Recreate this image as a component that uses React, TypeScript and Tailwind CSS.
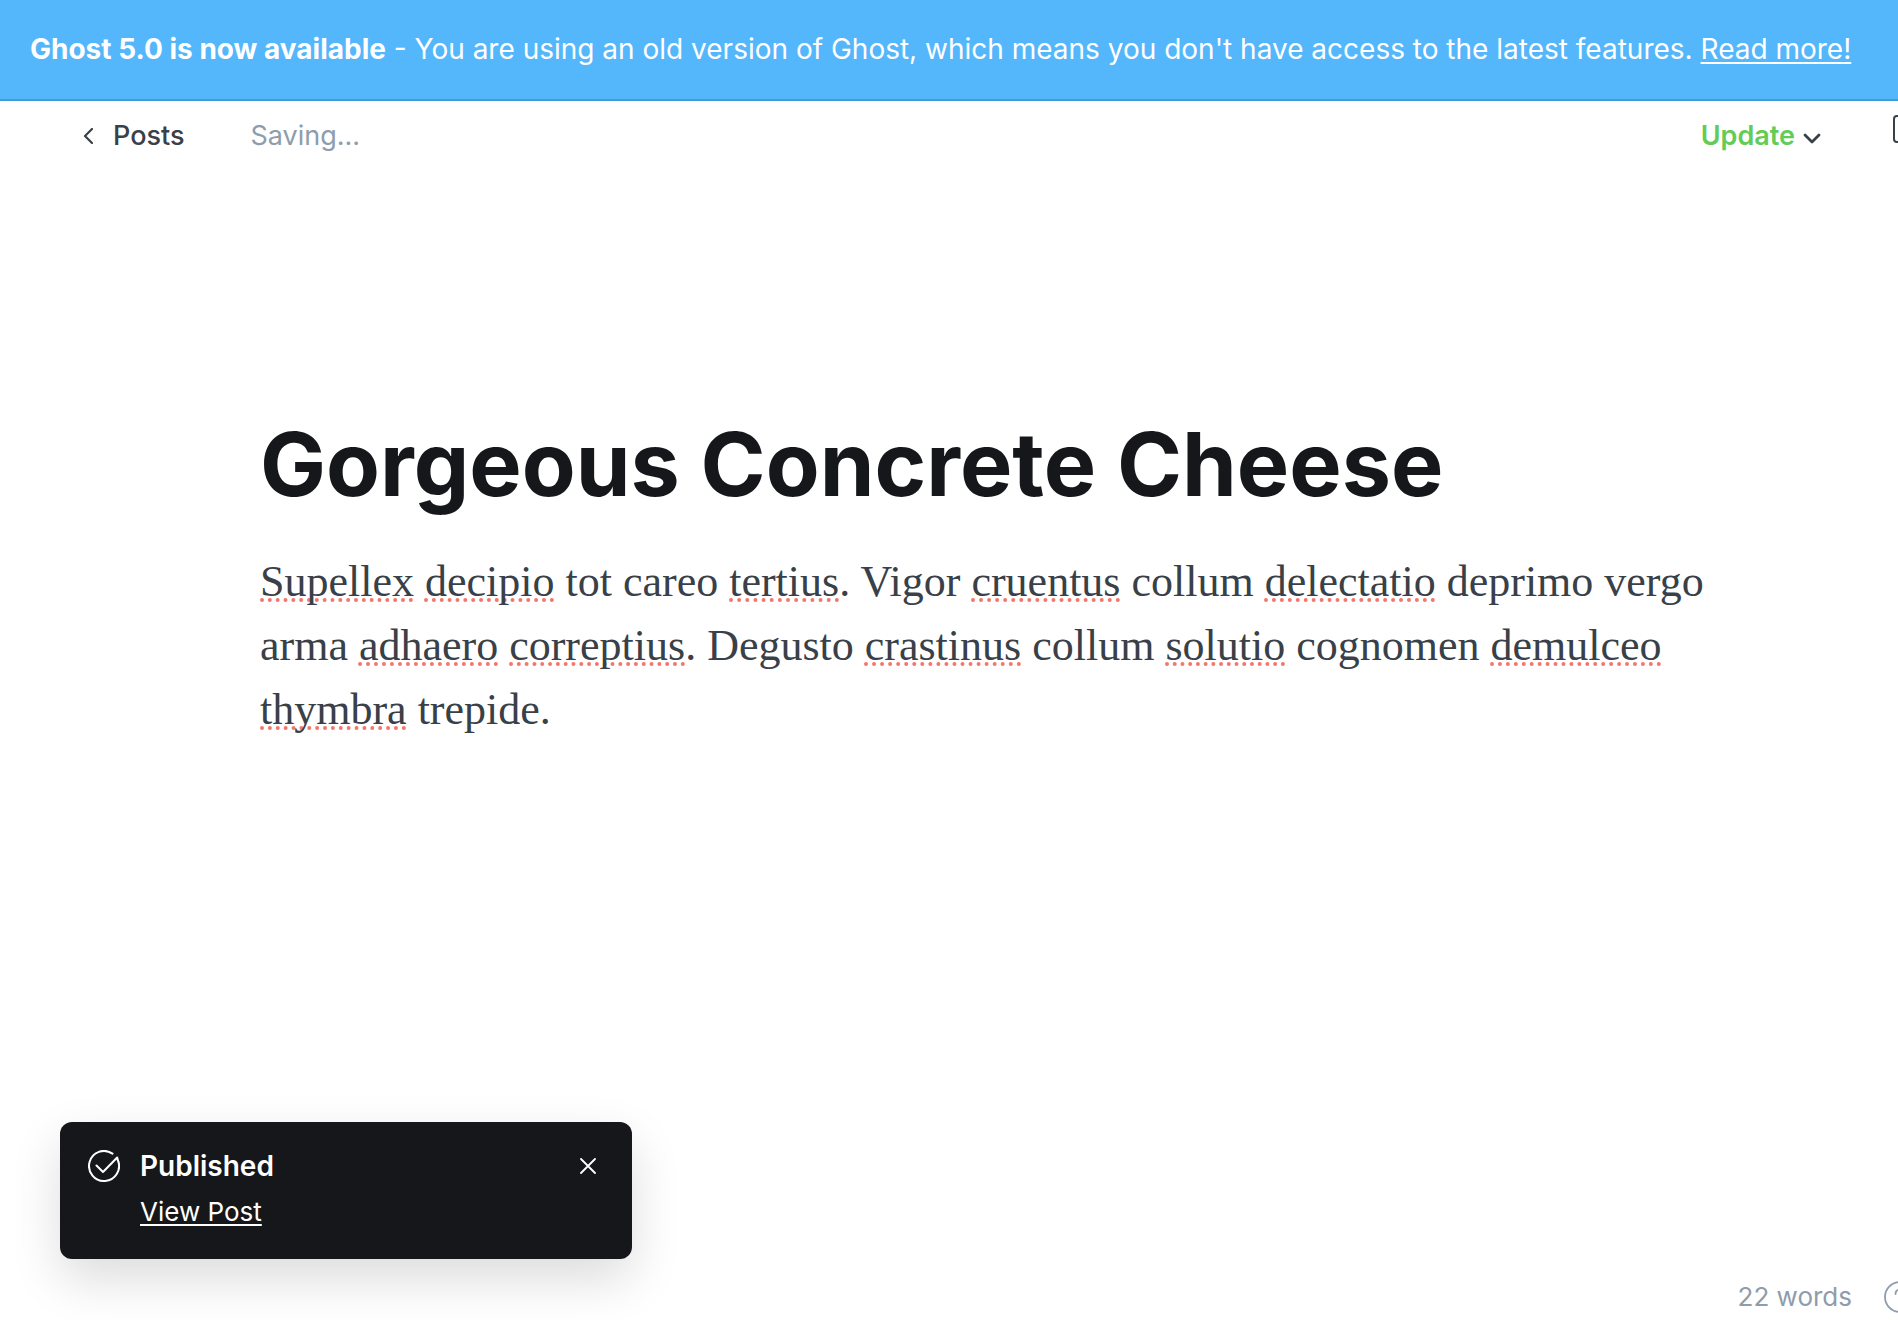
const body: { text: string; flagged?: boolean; tail?: string }[][] = [
  [
    { text: "Supellex", flagged: true },
    { text: "decipio", flagged: true },
    { text: "tot careo" },
    { text: "tertius", flagged: true, tail: "." },
    { text: "Vigor" },
    { text: "cruentus", flagged: true },
    { text: "collum" },
    { text: "delectatio", flagged: true },
    { text: "deprimo vergo" },
  ],
  [
    { text: "arma" },
    { text: "adhaero", flagged: true },
    { text: "correptius", flagged: true, tail: "." },
    { text: "Degusto" },
    { text: "crastinus", flagged: true },
    { text: "collum" },
    { text: "solutio", flagged: true },
    { text: "cognomen" },
    { text: "demulceo", flagged: true },
  ],
  [{ text: "thymbra", flagged: true }, { text: "trepide." }],
];

function Banner() {
  return (
    <aside className="border-b-2 border-[#3f9ce0] bg-[#54b6fb] px-[30px] py-[30px] text-[28px] leading-[39px] whitespace-nowrap text-white">
      <strong className="font-bold">Ghost 5.0 is now available</strong> - You are using an old
      version of Ghost, which means you don't have access to the latest features.{" "}
      <a href="#upgrade" className="underline decoration-2 underline-offset-[3px]">
        Read more!
      </a>
    </aside>
  );
}

function Toolbar() {
  return (
    <header className="flex h-[70px] items-center justify-between overflow-hidden pl-[83px] text-[27px] leading-9">
      <div className="flex items-center">
        <a href="#posts" className="flex items-center gap-5 font-medium text-[#394047]">
          <svg viewBox="0 0 10 16" className="h-4 w-[10px]" fill="none" stroke="currentColor" strokeWidth="2.2" strokeLinecap="round" strokeLinejoin="round" aria-hidden="true">
            <path d="M9 1 2 8l7 7" />
          </svg>
          Posts
        </a>
        <span className="ml-[66px] text-[#8e9cac]">Saving...</span>
      </div>
      <div className="-mr-6 flex items-center">
        <button type="button" className="mr-[72px] flex items-center gap-2 font-semibold text-[#62cc54]">
          Update
          <svg viewBox="0 0 18 11" className="mt-1 h-[11px] w-[18px] text-[#394047]" fill="none" stroke="currentColor" strokeWidth="2.8" strokeLinecap="round" strokeLinejoin="round" aria-hidden="true">
            <path d="m2 2 7 7 7-7" />
          </svg>
        </button>
        <button type="button" aria-label="Settings" className="-mt-[14px] h-7 w-[29px] rounded border-2 border-[#394047]" />
      </div>
    </header>
  );
}

function Toast() {
  return (
    <section role="status" className="flex w-[572px] items-start rounded-xl bg-[#15171a] px-7 pt-6 pb-[29px] text-white shadow-[0_20px_50px_rgba(0,0,0,0.14)]">
      <svg viewBox="0 0 32 32" className="mt-1 size-8 shrink-0" fill="none" stroke="currentColor" strokeWidth="2" strokeLinecap="round" strokeLinejoin="round" aria-hidden="true">
        <path d="M24.500 3.600A15 15 0 1 0 29.800 10M8.500 15.500l6.500 6.500L29.200 7.500l1 4" />
      </svg>
      <div className="ml-5 flex grow flex-col gap-2">
        <h2 className="text-[28px] leading-10 font-semibold">Published</h2>
        <a href="#view" className="self-start text-[26px] leading-9 underline decoration-2 underline-offset-[3px]">
          View Post
        </a>
      </div>
      <button type="button" aria-label="Close" className="mt-3 mr-2">
        <svg viewBox="0 0 16 16" className="size-4" fill="none" stroke="currentColor" strokeWidth="1.800" strokeLinecap="round" aria-hidden="true">
          <path d="m1 1 14 14M15 1 1 15" />
        </svg>
      </button>
    </section>
  );
}

export default function App() {
  return (
    <div className="flex min-h-screen flex-col overflow-hidden bg-white font-['Inter',sans-serif]">
      <Banner />
      <Toolbar />
      <main className="grow px-[260px] pt-[237px]">
        <h1 className="text-[88px] leading-[112px] font-bold whitespace-nowrap text-[#15171a]">
          Gorgeous Concrete Cheese
        </h1>
        <p className="mt-[30px] font-['Liberation_Serif',serif] text-[44px] leading-[64px] whitespace-nowrap text-[#394047]">
          {body.map((line, i) => (
            <span key={i} className="block">
              {line.map((word, j) => (
                <span key={j}>
                  {j > 0 && " "}
                  {word.flagged ? (
                    <span className="underline decoration-[#f2776d] decoration-dotted decoration-4 underline-offset-[2px] [text-decoration-skip-ink:none]">
                      {word.text}
                    </span>
                  ) : (
                    word.text
                  )}
                  {word.tail}
                </span>
              ))}
            </span>
          ))}
        </p>
      </main>
      <footer className="flex items-end justify-between pl-[60px]">
        <div className="pb-[61px]">
          <Toast />
        </div>
        <div className="-mr-[18px] flex items-center gap-8 pb-[7px] text-[26px] leading-8 text-[#8e9cac]">
          <span>22 words</span>
          <button type="button" aria-label="Help">
            <svg viewBox="0 0 32 32" className="size-8" fill="none" stroke="currentColor" strokeWidth="1.800" strokeLinecap="round" aria-hidden="true">
              <circle cx="16" cy="16" r="15" />
              <path d="M11.500 13a4.500 4.500 0 1 1 6.500 4c-1.500.8-2 1.500-2 3M16 24v.2" />
            </svg>
          </button>
        </div>
      </footer>
    </div>
  );
}
